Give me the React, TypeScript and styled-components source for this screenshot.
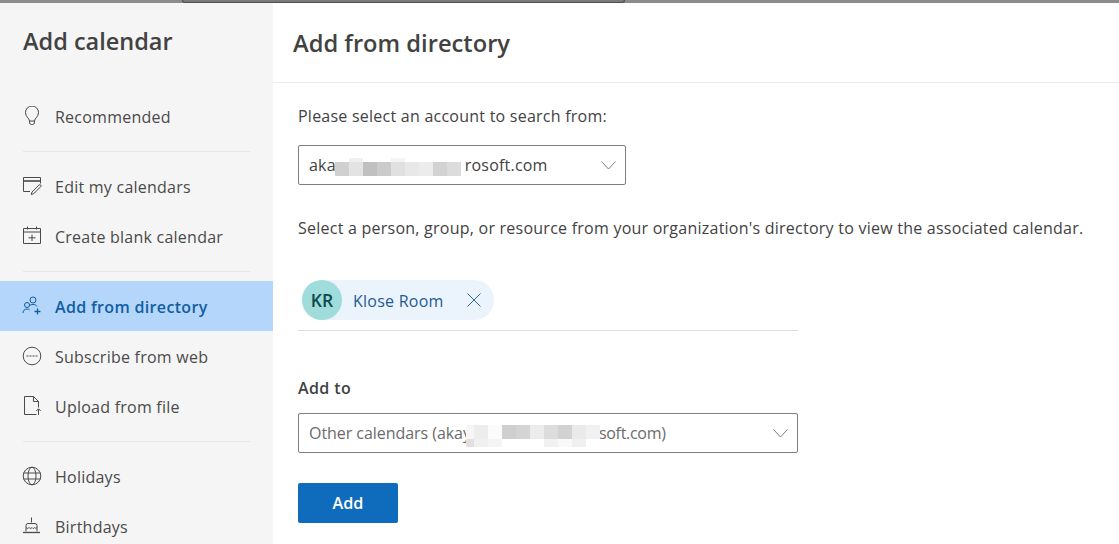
import React from "react"
import styled, { createGlobalStyle } from "styled-components"

const GlobalStyle = createGlobalStyle`
    html, body {
        margin: 0;
        padding: 0;
        height: 100%;
        overflow: hidden;
        background: #fff;
    }
    body {
        font-family: "Open Sans", "Noto Sans", sans-serif;
        color: #424242;
    }
`

const Page = styled.div`
    width: 1119px;
    height: 544px;
    display: flex;
    flex-direction: column;
    overflow: hidden;
`

const WindowEdge = styled.div`
    flex: none;
    height: 3px;
    background: #8c8c8c;
    padding-left: 182px;
`

const WindowTab = styled.div`
    width: 443px;
    height: 3px;
    box-sizing: border-box;
    background: #7a7a7a;
    border: 1px solid #4f4f4f;
    border-top: none;
    border-radius: 0 0 4px 4px;
`

const Body = styled.div`
    flex: 1;
    display: flex;
    min-height: 0;
`

const Sidebar = styled.nav`
    flex: none;
    width: 273px;
    background: #f5f5f5;
    overflow: hidden;
`

const SidebarTitle = styled.h1`
    margin: 0;
    height: 88px;
    padding: 20px 0 0 23px;
    box-sizing: border-box;
    font-size: 23.5px;
    line-height: 36px;
    font-weight: 600;
    color: #424242;
`

const NavRow = styled.div<{ $active?: boolean }>`
    height: 50px;
    display: flex;
    align-items: center;
    gap: 13px;
    padding-left: 22px;
    font-size: 16px;
    letter-spacing: ${(p) => (p.$active ? 0.33 : 0.24)}px;
    font-weight: ${(p) => (p.$active ? 600 : 400)};
    color: ${(p) => (p.$active ? "#115ea3" : "#4a4a4a")};
    background: ${(p) => (p.$active ? "#b4d6fa" : "transparent")};
`

const NavText = styled.span`
    padding-top: 2px;
`

const NavDivider = styled.div`
    height: 1px;
    margin: 10px 23px 9px 23px;
    background: #e6e6e6;
`

const NavIcon = styled.svg`
    flex: none;
    width: 20px;
    height: 20px;
    fill: none;
    stroke: currentColor;
    stroke-width: 1;
`

const Main = styled.main`
    flex: 1;
    min-width: 0;
`

const MainHeader = styled.header`
    height: 80px;
    box-sizing: border-box;
    padding: 22px 0 0 20px;
    border-bottom: 1px solid #ededed;
`

const MainTitle = styled.h2`
    margin: 0;
    font-size: 23.7px;
    line-height: 36px;
    font-weight: 600;
    color: #424242;
`

const Content = styled.div`
    padding: 20px 0 0 25px;
    display: flex;
    flex-direction: column;
    align-items: flex-start;
`

const Label = styled.div`
    font-size: 16px;
    line-height: 26px;
    letter-spacing: 0.24px;
    white-space: nowrap;
    color: #424242;
`

const Select = styled.div<{ $wide?: boolean; $muted?: boolean }>`
    width: ${(p) => (p.$wide ? 500 : 328)}px;
    height: 40px;
    box-sizing: border-box;
    display: flex;
    align-items: center;
    padding: 0 10px;
    border: 1px solid #7f7f7f;
    border-radius: 2px;
    background: #fff;
    font-size: 16px;
    letter-spacing: ${(p) => (p.$muted ? -0.05 : 0.2)}px;
    white-space: nowrap;
    color: ${(p) => (p.$muted ? "#6b6b6b" : "#424242")};
`

const DomainTail = styled.span`
    letter-spacing: -0.3px;
`

const Chevron = styled.svg`
    flex: none;
    margin-left: auto;
    margin-right: -1px;
    width: 15px;
    height: 9px;
    fill: none;
    stroke: #7d7d7d;
    stroke-width: 1;
`

const Mosaic = styled.span<{ $first: number; $cols: number; $before: number; $after: number; $top: number }>`
    position: relative;
    z-index: 1;
    flex: none;
    display: inline-grid;
    grid-template-columns: ${(p) => p.$first}px repeat(${(p) => p.$cols - 1}, 14px);
    margin: ${(p) => p.$top}px ${(p) => p.$after}px 0 ${(p) => p.$before}px;
`

const MosaicCell = styled.span<{ $shade: string; $height: number }>`
    height: ${(p) => p.$height}px;
    background: ${(p) => p.$shade};
`

const SelectTop = styled.div`
    margin-top: 16px;
`

const Hint = styled(Label)`
    margin-top: 30px;
`

const ChipField = styled.div`
    margin-top: 39px;
    width: 500px;
    height: 51px;
    box-sizing: border-box;
    padding-left: 4px;
    border-bottom: 1px solid #dedede;
`

const Chip = styled.div`
    width: 192px;
    height: 40px;
    display: flex;
    align-items: center;
    border-radius: 20px;
    background: #ebf3fc;
    color: #1f5b93;
    font-size: 16px;
    letter-spacing: 0.24px;
`

const Avatar = styled.div`
    flex: none;
    width: 40px;
    height: 40px;
    border-radius: 50%;
    background: #9fdcdb;
    color: #0a4a4a;
    display: flex;
    align-items: center;
    justify-content: center;
    font-size: 17.5px;
    font-weight: 600;
    letter-spacing: 0;
`

const ChipName = styled.span`
    margin-left: 11px;
    padding-top: 2px;
`

const ChipClose = styled.svg`
    flex: none;
    margin-left: auto;
    margin-right: 13px;
    width: 14px;
    height: 14px;
    fill: none;
    stroke: #2d6aa3;
    stroke-width: 1;
`

const SectionLabel = styled(Label)`
    margin-top: 44px;
    font-weight: 600;
    letter-spacing: 0.4px;
`

const SelectBottom = styled.div`
    margin-top: 12px;
`

const AddButton = styled.button`
    margin-top: 30px;
    width: 100px;
    height: 40px;
    border: none;
    border-radius: 2px;
    background: #0f6cbd;
    color: #fff;
    font-family: inherit;
    font-size: 16.2px;
    font-weight: 600;
`

const topUpper = ["#fff", "#efefef", "#fff", "#fff", "#f4f4f4", "#fff", "#fff", "#fff", "#fff"]
const topLower = ["#d0d0d0", "#e3e3e3", "#c0c0c0", "#cbcbcb", "#e0e0e0", "#e8e8e8", "#ececec", "#d2d2d2", "#dcdcdc"]
const bottomUpper = ["#f6f6f6", "#ededed", "#fbfbfb", "#cfcfcf", "#d4d4d4", "#ececec", "#dcdcdc", "#d2d2d2", "#eaeaea", "#f1f1f1"]
const bottomLower = ["#e0e0e0", "#f0f0f0", "#f4f4f4", "#fff", "#fff", "#fff", "#f1f1f1", "#f9f9f9", "#f0f0f0", "#fff"]

const App: React.FC = () => (
    <Page>
        <GlobalStyle />
        <WindowEdge>
            <WindowTab />
        </WindowEdge>
        <Body>
            <Sidebar>
                <SidebarTitle>Add calendar</SidebarTitle>
                <NavRow>
                    <NavIcon viewBox="0 0 20 20">
                        <path d="M7.500 15C7.300 12 3.500 11 3.500 6.500a6.500 6.500 0 0 1 13 0c0 4.500-3.800 5.500-4 8.500z" />
                        <path d="M7.600 15v2a2 2 0 0 0 2 1.500h.8a2 2 0 0 0 2-1.500v-2" />
                    </NavIcon>
                    <NavText>Recommended</NavText>
                </NavRow>
                <NavDivider />
                <NavRow>
                    <NavIcon viewBox="0 0 20 20">
                        <path d="M8 15.500H1.500V1.500h17v6" />
                        <path d="M1.500 5h17" strokeWidth="1.600" />
                        <path d="M10 16l-.8 2.500 2.500-.8 7-7a1.200 1.200 0 0 0-1.700-1.700z" />
                    </NavIcon>
                    <NavText>Edit my calendars</NavText>
                </NavRow>
                <NavRow>
                    <NavIcon viewBox="0 0 20 20">
                        <path d="M1.500 2.500h17v15h-17z" />
                        <path d="M1.500 6h17M5.500.5v3M14.500.5v3M10 8.500v6.500M6.500 11.800h7" />
                    </NavIcon>
                    <NavText>Create blank calendar</NavText>
                </NavRow>
                <NavDivider />
                <NavRow $active>
                    <NavIcon viewBox="0 0 20 20">
                        <circle cx="11" cy="4" r="3" />
                        <circle cx="5" cy="9" r="2.500" />
                        <path d="M1 17c0-2.500 1.500-4 4-4 1.200 0 2 .3 2.700 1M7.500 9.500c1-.7 2-1 3.500-1 1.800 0 3 .5 4 2" />
                        <path d="M15.500 12.500v6M12.500 15.500h6" strokeWidth="1.300" />
                    </NavIcon>
                    <NavText>Add from directory</NavText>
                </NavRow>
                <NavRow>
                    <NavIcon viewBox="0 0 20 20">
                        <circle cx="10" cy="10" r="8.800" />
                        <path d="M4.500 10h11" strokeDasharray="2 1" strokeWidth="1.200" />
                    </NavIcon>
                    <NavText>Subscribe from web</NavText>
                </NavRow>
                <NavRow>
                    <NavIcon viewBox="0 0 20 20">
                        <path d="M14.500 18.500H2.500V.5h9l5 5v6" />
                        <path d="M11.500.5v5h5M16.500 19v-6M14.300 15l2.200-2.200 2.200 2.200" />
                    </NavIcon>
                    <NavText>Upload from file</NavText>
                </NavRow>
                <NavDivider />
                <NavRow>
                    <NavIcon viewBox="0 0 20 20">
                        <circle cx="10" cy="10" r="8.800" />
                        <ellipse cx="10" cy="10" rx="4" ry="8.800" />
                        <path d="M1.500 7h17M1.500 13h17" />
                    </NavIcon>
                    <NavText>Holidays</NavText>
                </NavRow>
                <NavRow>
                    <NavIcon viewBox="0 0 20 20">
                        <path d="M9.500 1.500v5" />
                        <path d="M4 15.500v-6a2 2 0 0 1 2-2h7a2 2 0 0 1 2 2v6" />
                        <path d="M4 11.500c1.200 1.200 2.300 1.200 3 0 .8 1.200 2 1.200 3 0 .8 1.200 2 1.200 2.800 0 .7 1.200 1.500 1.200 2.200 0" />
                        <path d="M1 16.500h17" strokeWidth="1.300" />
                    </NavIcon>
                    <NavText>Birthdays</NavText>
                </NavRow>
            </Sidebar>
            <Main>
                <MainHeader>
                    <MainTitle>Add from directory</MainTitle>
                </MainHeader>
                <Content>
                    <Label>Please select an account to search from:</Label>
                    <SelectTop>
                        <Select>
                            aka
                            <Mosaic $first={14} $cols={9} $before={-1} $after={4} $top={4}>
                                {topUpper.map((shade, i) => (
                                    <MosaicCell key={`u${i}`} $shade={shade} $height={4} />
                                ))}
                                {topLower.map((shade, i) => (
                                    <MosaicCell key={`l${i}`} $shade={shade} $height={14} />
                                ))}
                            </Mosaic>
                            rosoft.com
                            <Chevron viewBox="0 0 15 9">
                                <path d="M.5.5L7.500 8l7-7.500" />
                            </Chevron>
                        </Select>
                    </SelectTop>
                    <Hint>Select a person, group, or resource from your organization's directory to view the associated calendar.</Hint>
                    <ChipField>
                        <Chip>
                            <Avatar>KR</Avatar>
                            <ChipName>Klose Room</ChipName>
                            <ChipClose viewBox="0 0 14 14">
                                <path d="M.5.5l13 13M13.500.5l-13 13" />
                            </ChipClose>
                        </Chip>
                    </ChipField>
                    <SectionLabel>Add to</SectionLabel>
                    <SelectBottom>
                        <Select $wide $muted>
                            Other calendars (akay
                            <Mosaic $first={8} $cols={10} $before={-5} $after={-1} $top={6}>
                                {bottomUpper.map((shade, i) => (
                                    <MosaicCell key={`u${i}`} $shade={shade} $height={14} />
                                ))}
                                {bottomLower.map((shade, i) => (
                                    <MosaicCell key={`l${i}`} $shade={shade} $height={8} />
                                ))}
                            </Mosaic>
                            <DomainTail>soft.com)</DomainTail>
                            <Chevron viewBox="0 0 15 9">
                                <path d="M.5.5L7.500 8l7-7.500" />
                            </Chevron>
                        </Select>
                    </SelectBottom>
                    <AddButton>Add</AddButton>
                </Content>
            </Main>
        </Body>
    </Page>
)

export default App
